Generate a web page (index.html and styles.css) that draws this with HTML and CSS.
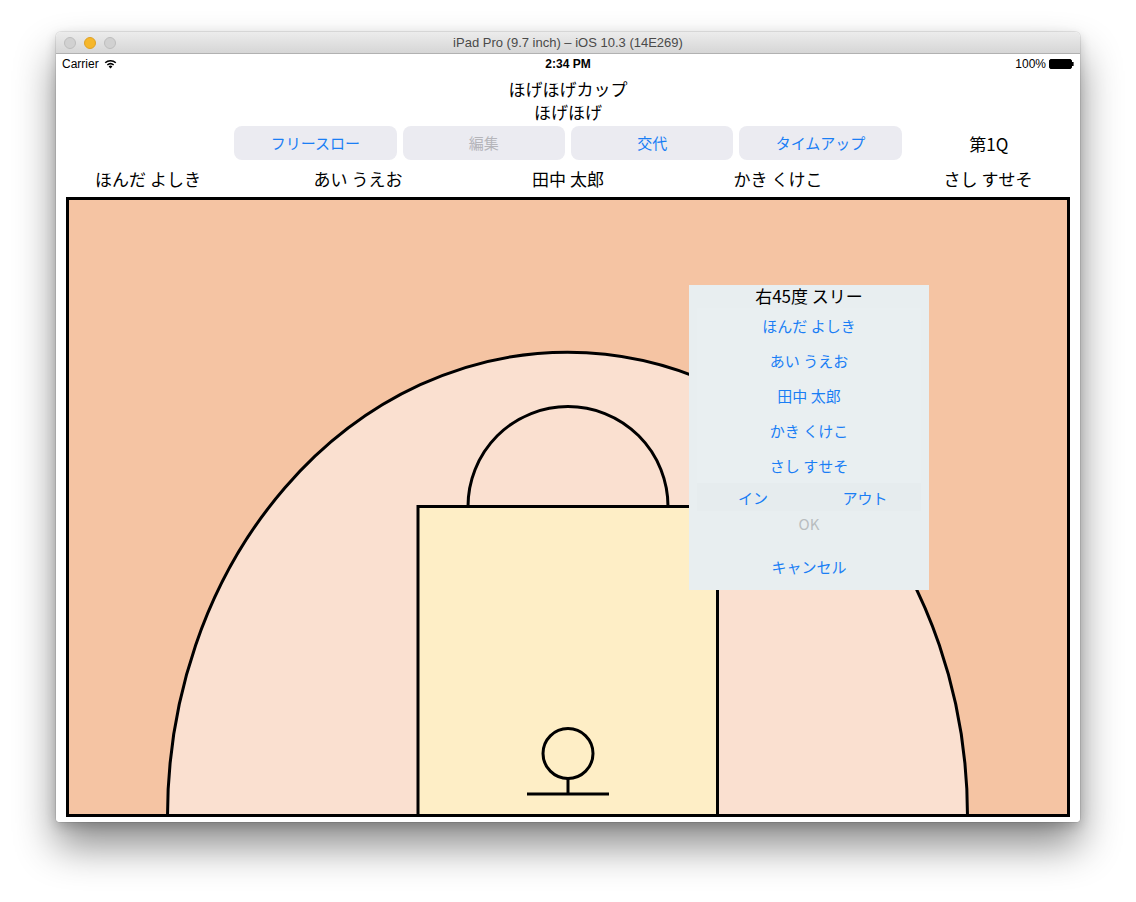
FILE: index.html
```html
<!DOCTYPE html>
<html lang="ja">
<head>
<meta charset="utf-8">
<title>iPad Pro (9.7 inch) – iOS 10.3 (14E269)</title>
<link rel="stylesheet" href="styles.css">
</head>
<body>
<div class="window">
  <div class="titlebar">
    <div class="lights">
      <span class="light light-off"></span>
      <span class="light light-min"></span>
      <span class="light light-off"></span>
    </div>
    <div class="wtitle">iPad Pro (9.7 inch) – iOS 10.3 (14E269)</div>
    <div></div>
  </div>
  <div class="screen">
    <div class="statusbar">
      <div class="sb-left">Carrier
        <svg class="wifi" width="13" height="10" viewBox="0 0 13 10">
          <path d="M6.5 9.6 L4.6 7.4 A2.9 2.9 0 0 1 8.4 7.4 Z" fill="#000"/>
          <path d="M3.3 6 A4.9 4.9 0 0 1 9.7 6" fill="none" stroke="#000" stroke-width="1.5"/>
          <path d="M1.2 3.8 A7.8 7.8 0 0 1 11.8 3.8" fill="none" stroke="#000" stroke-width="1.5"/>
        </svg>
      </div>
      <div class="sb-center">2:34 PM</div>
      <div class="sb-right">100%
        <svg class="battery" width="25" height="10" viewBox="0 0 25 10">
          <rect x="0.5" y="0.5" width="22" height="9" rx="1.5" fill="#000" stroke="#000"/>
          <rect x="23" y="3" width="1.6" height="4" fill="#000"/>
        </svg>
      </div>
    </div>

    <div class="heading">
      <div class="heading-line">ほげほげカップ</div>
      <div class="heading-line">ほげほげ</div>
    </div>

    <div class="toolbar">
      <div class="tb-empty"></div>
      <button class="tb-btn">フリースロー</button>
      <button class="tb-btn tb-disabled">編集</button>
      <button class="tb-btn">交代</button>
      <button class="tb-btn">タイムアップ</button>
      <div class="quarter">第1Q</div>
    </div>

    <div class="players">
      <div class="player">ほんだ よしき</div>
      <div class="player">あい うえお</div>
      <div class="player">田中 太郎</div>
      <div class="player">かき くけこ</div>
      <div class="player">さし すせそ</div>
    </div>

    <div class="court">
      <svg class="court-svg" width="1004" height="620" viewBox="0 0 1004 620">
        <rect x="0" y="0" width="1004" height="620" fill="#f5c4a3"/>
        <path d="M101.5 619 A400 464 0 0 1 901.5 619 Z" fill="#fae0d0" stroke="#000" stroke-width="3"/>
        <path d="M402 309.5 A100 100 0 0 1 602 309.5" fill="none" stroke="#000" stroke-width="3"/>
        <rect x="352" y="309.5" width="299.5" height="310" fill="#feeec6" stroke="#000" stroke-width="3"/>
        <circle cx="502" cy="556.5" r="25" fill="none" stroke="#000" stroke-width="3"/>
        <line x1="502" y1="581.5" x2="502" y2="597" stroke="#000" stroke-width="3"/>
        <line x1="461" y1="597" x2="543" y2="597" stroke="#000" stroke-width="3"/>
        <rect x="1.5" y="1.5" width="1001" height="617" fill="none" stroke="#000" stroke-width="3"/>
      </svg>

      <div class="popup">
        <div class="popup-title">右45度 スリー</div>
        <div class="popup-item">ほんだ よしき</div>
        <div class="popup-item">あい うえお</div>
        <div class="popup-item">田中 太郎</div>
        <div class="popup-item">かき くけこ</div>
        <div class="popup-item">さし すせそ</div>
        <div class="popup-inout">
          <div class="popup-half">イン</div>
          <div class="popup-half">アウト</div>
        </div>
        <div class="popup-ok">OK</div>
        <div class="popup-cancel">キャンセル</div>
      </div>
    </div>
  </div>
</div>
</body>
</html>
```

FILE: styles.css
```css
html, body {
  margin: 0;
  padding: 0;
  background: #ffffff;
}

body {
  padding: 32px 56px 80px 56px;
  font-family: "Liberation Sans", "Noto Sans CJK JP", sans-serif;
}

.window {
  width: 1024px;
  border-radius: 5px 5px 4px 4px;
  overflow: hidden;
  background: #ffffff;
  box-shadow: 0 24px 40px rgba(0, 0, 0, 0.45), 0 4px 12px rgba(0, 0, 0, 0.18), 0 0 0 1px rgba(0, 0, 0, 0.08);
}

/* ---------- mac title bar ---------- */
.titlebar {
  height: 22px;
  box-sizing: border-box;
  display: grid;
  grid-template-columns: 1fr auto 1fr;
  align-items: center;
  background: linear-gradient(#ececec, #d6d6d6);
  border-bottom: 1px solid #b1b1b1;
}

.lights {
  display: flex;
  gap: 8px;
  padding-left: 8px;
}

.light {
  width: 12px;
  height: 12px;
  box-sizing: border-box;
  border-radius: 50%;
}

.light-off {
  background: #d1d1d1;
  border: 1px solid #bdbdbd;
}

.light-min {
  background: #f6b72b;
  border: 1px solid #dea126;
}

.wtitle {
  font-size: 13px;
  color: #4a4a4a;
  line-height: 16px;
}

/* ---------- iOS screen ---------- */
.screen {
  height: 768px;
  display: flex;
  flex-direction: column;
  background: #ffffff;
}

.statusbar {
  height: 20px;
  display: grid;
  grid-template-columns: 1fr auto 1fr;
  align-items: center;
  padding: 0 6px;
  font-size: 12px;
  color: #000;
}

.sb-left {
  display: flex;
  align-items: center;
  gap: 5px;
}

.sb-center {
  font-weight: bold;
}

.sb-right {
  display: flex;
  align-items: center;
  justify-content: flex-end;
  gap: 3px;
}

.heading {
  margin-top: 3px;
  text-align: center;
  font-family: "Noto Sans CJK JP", sans-serif;
  font-size: 17px;
  color: #000;
}

.heading-line {
  line-height: 23px;
  height: 23px;
}

.toolbar {
  margin: 3px 10px 0 10px;
  height: 34px;
  display: grid;
  grid-template-columns: repeat(6, 1fr);
  gap: 6px;
}

.tb-btn {
  border: none;
  margin: 0;
  padding: 0;
  border-radius: 8px;
  background: #ebebf1;
  color: #1a7ef5;
  font-family: "Noto Sans CJK JP", sans-serif;
  font-size: 15px;
  line-height: 34px;
}

.tb-disabled {
  color: #b5b5ba;
}

.quarter {
  display: flex;
  align-items: center;
  justify-content: center;
  font-family: "Noto Sans CJK JP", sans-serif;
  font-size: 17px;
  color: #000;
}

.players {
  height: 37px;
  display: grid;
  grid-template-columns: repeat(5, 184px);
  column-gap: 26px;
  align-items: center;
  font-family: "Noto Sans CJK JP", sans-serif;
  font-size: 17px;
  color: #000;
}

.player {
  text-align: center;
  line-height: 20px;
}

/* ---------- court ---------- */
.court {
  position: relative;
  width: 1004px;
  height: 620px;
  margin: 0 10px;
}

.court-svg {
  display: block;
}

.popup {
  position: absolute;
  left: 623px;
  top: 88px;
  width: 240px;
  height: 305px;
  box-sizing: border-box;
  background: #e8eef0;
  display: flex;
  flex-direction: column;
  font-family: "Noto Sans CJK JP", sans-serif;
  text-align: center;
}

.popup-title {
  height: 23px;
  line-height: 22px;
  font-size: 17px;
  color: #000;
}

.popup-item {
  height: 35px;
  line-height: 35px;
  font-size: 15px;
  color: #1a7ef5;
  margin: 0 8px;
  background: #e9eff1;
}

.popup-inout {
  height: 28px;
  margin: 0 8px;
  display: grid;
  grid-template-columns: 1fr 1fr;
  align-items: center;
  font-size: 15px;
  color: #1a7ef5;
  background: #e6ecee;
}

.popup-ok {
  height: 26px;
  line-height: 26px;
  font-size: 15px;
  color: #b9bdbf;
}

.popup-cancel {
  margin-top: 15px;
  height: 30px;
  line-height: 30px;
  font-size: 15px;
  color: #1a7ef5;
}
```
